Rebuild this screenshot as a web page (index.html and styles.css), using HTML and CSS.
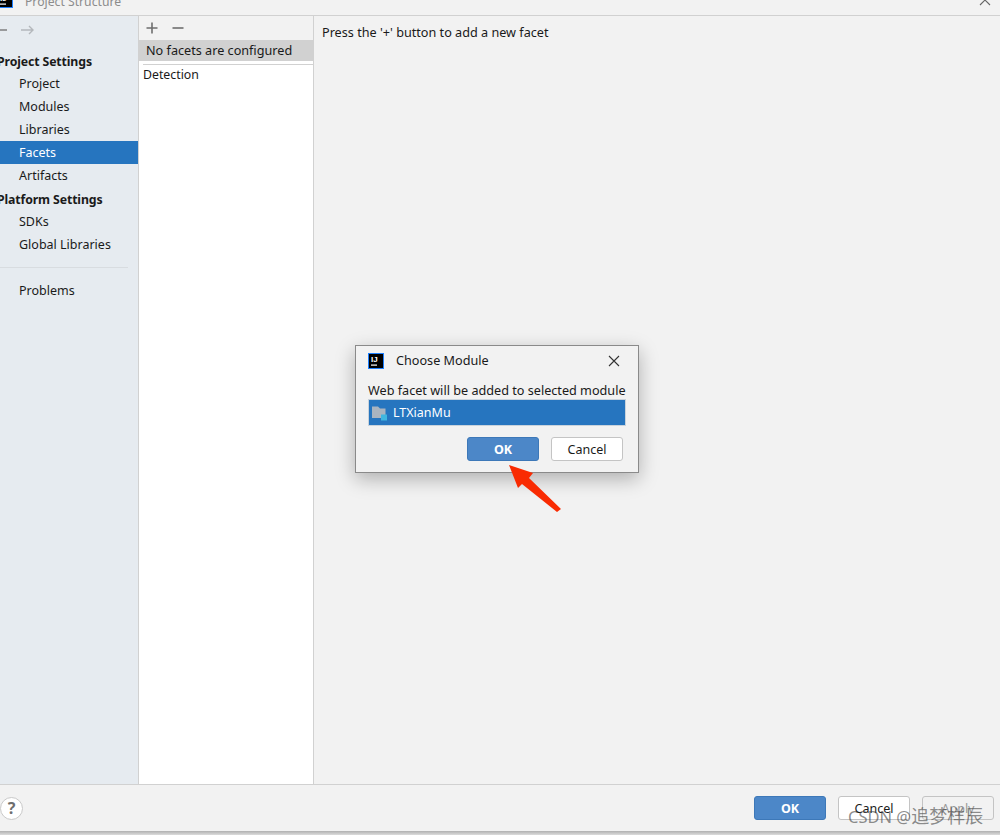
FILE: index.html
```html
<!DOCTYPE html>
<html lang="en">
<head>
<meta charset="utf-8">
<title>Project Structure</title>
<link rel="stylesheet" href="styles.css">
</head>
<body>
<div class="window">
  <header class="titlebar">
    <svg class="app-icon" width="16" height="16" viewBox="0 0 16 16"><rect x="0.5" y="0.5" width="15" height="15" fill="#000" stroke="#1e80ff"/><rect x="3" y="11.500" width="6" height="1.2" fill="#fff"/><text x="3" y="9" class="ij-text">IJ</text></svg>
    <span class="title">Project Structure</span>
    <svg class="close-top" width="12" height="12" viewBox="0 0 12 12"><path d="M1 1l10 10M11 1L1 11" stroke="#666" stroke-width="1.1" fill="none"/></svg>
  </header>
  <div class="main">
    <nav class="sidebar">
      <div class="nav-arrows">
        <svg width="7" height="12" viewBox="0 0 7 12"><path d="M0 6h7" stroke="#777" stroke-width="1.400" fill="none"/></svg>
        <svg width="14" height="12" viewBox="0 0 14 12"><path d="M0 6h12M8 2l4 4-4 4" stroke="#b4b8bc" stroke-width="1.400" fill="none"/></svg>
      </div>
      <div class="nav-head">Project Settings</div>
      <div class="nav-item">Project</div>
      <div class="nav-item">Modules</div>
      <div class="nav-item">Libraries</div>
      <div class="nav-item selected">Facets</div>
      <div class="nav-item">Artifacts</div>
      <div class="nav-head">Platform Settings</div>
      <div class="nav-item">SDKs</div>
      <div class="nav-item">Global Libraries</div>
      <div class="nav-sep"></div>
      <div class="nav-item">Problems</div>
    </nav>
    <section class="facets">
      <div class="toolbar">
        <svg width="12" height="12" viewBox="0 0 12 12"><path d="M6 0.5v11M0.5 6h11" stroke="#6e6e6e" stroke-width="1.6" fill="none"/></svg>
        <svg width="12" height="12" viewBox="0 0 12 12"><path d="M0.5 6h11" stroke="#6e6e6e" stroke-width="1.6" fill="none"/></svg>
      </div>
      <div class="facet-empty">No facets are configured</div>
      <div class="facet-list">
        <div class="facet-rule"></div>
        <div class="facet-row">Detection</div>
      </div>
    </section>
    <section class="content">Press the '+' button to add a new facet</section>
  </div>
  <footer class="footer">
    <div class="help">?</div>
    <div class="footer-buttons">
      <button class="btn primary">OK</button>
      <button class="btn">Cancel</button>
      <button class="btn disabled">Apply</button>
    </div>
  </footer>
</div>

<div class="dialog">
  <div class="dialog-title">
    <svg width="16" height="16" viewBox="0 0 16 16"><rect x="0.5" y="0.5" width="15" height="15" fill="#000" stroke="#1e80ff"/><rect x="3" y="11.500" width="6" height="1.2" fill="#fff"/><text x="3" y="9" class="ij-text">IJ</text></svg>
    <span class="dialog-name">Choose Module</span>
    <svg class="dialog-close" width="12" height="12" viewBox="0 0 12 12"><path d="M1 1l10 10M11 1L1 11" stroke="#333" stroke-width="1.1" fill="none"/></svg>
  </div>
  <div class="dialog-body">
    <div class="dialog-label">Web facet will be added to selected module</div>
    <div class="module-list">
      <svg width="16" height="16" viewBox="0 0 16 16"><path d="M0 1.500h6l2 2h5.500v9.500H0z" fill="#a9b4c0"/><rect x="9" y="9.500" width="6" height="6" fill="#40b6e0"/></svg>
      <span>LTXianMu</span>
    </div>
    <div class="dialog-buttons">
      <button class="btn primary">OK</button>
      <button class="btn">Cancel</button>
    </div>
  </div>
</div>

<svg class="arrow" width="60" height="56" viewBox="0 0 60 56"><path d="M4 5L28 13L24 18L56 49L52 52L17 24L13 28z" fill="#f92b02"/></svg>

<div class="watermark">CSDN @<span class="watermark-cjk">追梦样辰</span></div>
</body>
</html>
```
FILE: styles.css
```css
* { box-sizing: border-box; }
html, body { margin: 0; height: 835px; overflow: hidden; }
body {
  position: relative;
  background: linear-gradient(#a8a8a8, #a8a8a8 831px, #b0b0b0 831px, #dcdcdc);
  font-family: "Noto Sans", "Liberation Sans", sans-serif;
  font-size: 12.5px;
  color: #1a1a1a;
}
.window { display: flex; flex-direction: column; height: 831px; background: #f2f2f2; }
.titlebar {
  height: 16px;
  flex: none;
  display: flex;
  align-items: flex-end;
  padding: 0 9px 0 0;
  border-bottom: 1px solid #d1d1d1;
  overflow: hidden;
  background: #f2f2f2;
}
.app-icon { flex: none; margin: 0 12px 7px -3px; }
.ij-text { font: 700 8px "Liberation Sans", sans-serif; fill: #fff; }
.title { color: #8c8c8c; line-height: 16px; font-size: 12.2px; margin-bottom: 5px; }
.close-top { margin-left: auto; flex: none; margin-bottom: 9px; }
.main { flex: 1; display: flex; min-height: 0; }
.sidebar { width: 139px; flex: none; background: #e6ebf0; border-right: 1px solid #d1d1d1; }
.nav-arrows { height: 23px; display: flex; gap: 14px; align-items: center; padding-top: 5px; margin-bottom: 10px; }
.nav-head, .nav-item { height: 23px; line-height: 23px; white-space: nowrap; }
.nav-head { font-weight: 700; margin-left: -3px; font-size: 12.3px; letter-spacing: -0.12px; line-height: 25px; }
.nav-item { padding-left: 19px; }
.nav-item.selected { background: #2675bf; color: #fff; }
.nav-sep { height: 1px; margin: 11px 10px 11px 0; background: #d8dce0; }
.facets { width: 175px; flex: none; display: flex; flex-direction: column; border-right: 1px solid #d1d1d1; }
.toolbar { height: 24px; display: flex; gap: 14px; align-items: center; padding: 0 0 0 7px; }
.facet-empty { height: 21px; line-height: 20px; padding-left: 7px; background: #d1d1d1; white-space: nowrap; font-size: 12.650px; }
.facet-list { flex: 1; background: #fff; padding-top: 3px; }
.facet-rule { height: 1px; margin-left: 4px; background: #d1d1d1; }
.facet-row { height: 19px; line-height: 19px; padding: 0 4px; font-size: 12.3px; }
.content { flex: 1; padding: 7px 8px; line-height: 18px; font-size: 12.650px; }
.footer { height: 47px; flex: none; display: flex; align-items: center; justify-content: space-between; border-top: 1px solid #d1d1d1; }
.help {
  width: 23px; height: 23px; border-radius: 50%;
  background: #fff; border: 1px solid #c9c9c9; color: #6e6e6e;
  font-weight: 700; font-size: 16px; line-height: 20px; text-align: center;
}
.footer-buttons { display: flex; gap: 12px; margin-right: 6px; }
.btn {
  width: 72px; height: 24px; padding: 1px 0 0; border-radius: 3px;
  border: 1px solid #c4c4c4; background: #fff; color: #1a1a1a;
  font: inherit; line-height: 20px;
}
.btn.primary { background: #4c87c8; border-color: #3d78b8; color: #fff; font-weight: 700; }
.btn.disabled { background: #f2f2f2; color: #999; }
.dialog {
  position: absolute; left: 355px; top: 345px; width: 284px; height: 128px;
  background: #f2f2f2; border: 1px solid #8a8a8a;
  box-shadow: 0 6px 18px rgba(0, 0, 0, 0.28);
}
.dialog-title { height: 29px; display: flex; align-items: center; padding: 0 18px 0 12px; }
.dialog-name { margin: 0 0 2px 12px; font-size: 12.650px; }
.dialog-close { margin-left: auto; }
.dialog-body { padding: 6px 12px 0; }
.dialog-label { height: 18px; line-height: 18px; white-space: nowrap; font-size: 12.650px; }
.module-list {
  height: 27px; display: flex; align-items: center; gap: 5px;
  padding-left: 3px; background: #2675bf; color: #fff; border: 1px solid #c9d3dc;
}
.dialog-buttons { display: flex; justify-content: flex-end; gap: 12px; margin-top: 11px; padding-right: 3px; }
.arrow { position: absolute; left: 505px; top: 460px; }
.watermark {
  position: absolute; left: 848px; top: 805px; white-space: nowrap;
  font-family: "Noto Sans", "Noto Sans CJK SC", sans-serif; font-size: 16.500px;
  line-height: 22px; color: rgba(70, 70, 70, 0.62);
}
.watermark-cjk { font-size: 18px; }
```
